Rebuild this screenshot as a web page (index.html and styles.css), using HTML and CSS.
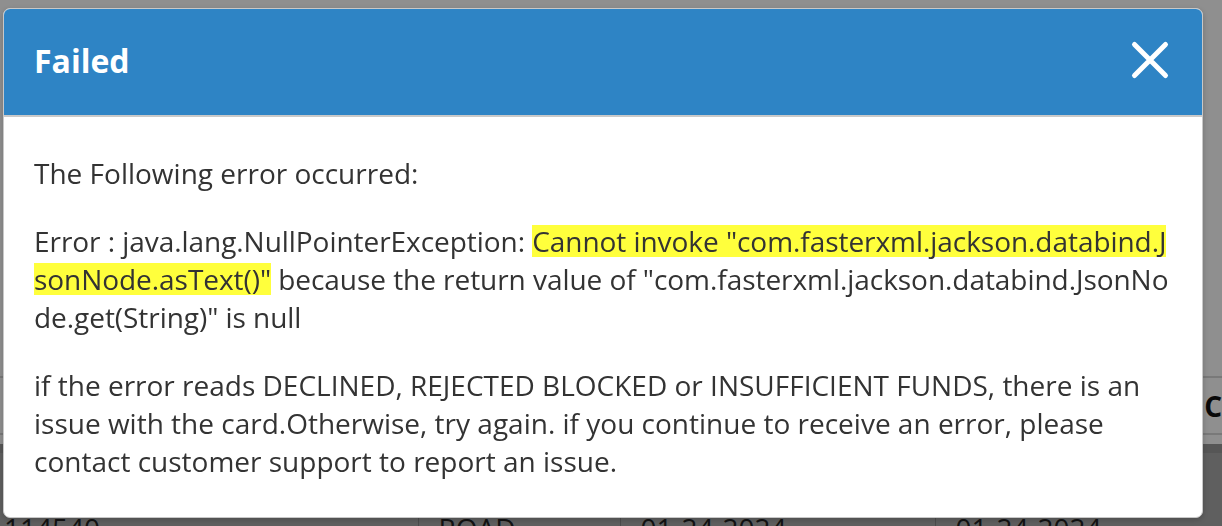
FILE: index.html
```html
<!DOCTYPE html>
<html>
<head>
<meta charset="UTF-8">
<title>Failed</title>
<link rel="stylesheet" href="styles.css">
</head>
<body>
<div class="page">
  <div class="page-top"></div>
  <table class="grid">
    <colgroup><col class="c1"><col class="c2"><col class="c3"><col class="c4"></colgroup>
    <tr class="row"><td></td><td></td><td></td><td class="last">C</td></tr>
    <tr class="row-gap"><td colspan="4"></td></tr>
    <tr class="row-head"><td colspan="4"></td></tr>
    <tr class="row-sel"><td>114540</td><td>ROAD</td><td>01-24-2024</td><td>01-24-2024</td></tr>
  </table>
</div>
<div class="backdrop"></div>
<div class="modal">
  <div class="modal-head">
    <h2 class="modal-title">Failed</h2>
    <div class="modal-close">
      <svg width="40" height="40" viewBox="0 0 40 40"><path d="M4.5 4.5L35.5 35.5M35.5 4.5L4.5 35.5" stroke="#fff" stroke-width="5" stroke-linecap="round" fill="none"/></svg>
    </div>
  </div>
  <div class="modal-body">
    <p>The Following error occurred:</p>
    <p class="err">Error : java.lang.NullPointerException: <span class="hl">Cannot invoke "com.fasterxml.jackson.databind.JsonNode.asText()"</span> because the return value of "com.fasterxml.jackson.databind.JsonNode.get(String)" is null</p>
    <p>if the error reads DECLINED, REJECTED BLOCKED or INSUFFICIENT FUNDS, there is an issue with the card.Otherwise, try again. if you continue to receive an error, please contact customer support to report an issue.</p>
  </div>
</div>
</body>
</html>
```

FILE: styles.css
```css
*{margin:0;padding:0;box-sizing:border-box}
html,body{height:100%;overflow:hidden}
body{font-family:"Open Sans",sans-serif;background:#fff;color:#333}
.page{height:526px;overflow:hidden}
.page-top{height:376px}
.grid{width:100%;border-collapse:collapse;table-layout:fixed;font-size:28px}
.grid .c1{width:418px}
.grid .c2{width:202px}
.grid .c3{width:315px}
.grid td{padding:0 20px;white-space:nowrap;overflow:hidden}
.row td{height:57px;border-top:2px solid #d8d8d8;border-bottom:2px solid #d8d8d8;font-weight:bold;color:#111}
.row td.last{text-align:right;padding-right:0;overflow:visible}
.row-gap td{height:10px}
.row-head td{height:9px;background:#9a9a9a}
.row-sel td{height:80px;background:#aaa;vertical-align:top;padding-top:56px;color:#222;border-left:1px solid #888}
.row-sel td:first-child{border-left:0;padding-left:4px}
.backdrop{position:fixed;top:0;left:0;right:0;bottom:0;background:rgba(0,0,0,.44)}
.modal{position:fixed;top:8px;left:3px;width:1200px;height:510px;background:#fff;border:1px solid #c8c8c8;border-radius:7px;overflow:hidden;box-shadow:0 2px 6px rgba(0,0,0,.2)}
.modal-head{height:108px;background:#2e84c5;border-bottom:2px solid #c9c9c9;display:flex;align-items:center;justify-content:space-between;padding:0 32px 4px 30px}
.modal-title{color:#fff;font-size:32px;font-weight:700}
.modal-close{width:40px;height:40px;margin-top:0}
.modal-close svg{display:block}
.modal-body{padding:37px 30px 0}
.modal-body p{font-size:28px;line-height:38px;margin-bottom:30px}
.modal-body .err{word-break:break-all;letter-spacing:-0.05px}
.hl{background:linear-gradient(#ffff3c,#ffff3c) 0 50%/100% 32px no-repeat}
```
